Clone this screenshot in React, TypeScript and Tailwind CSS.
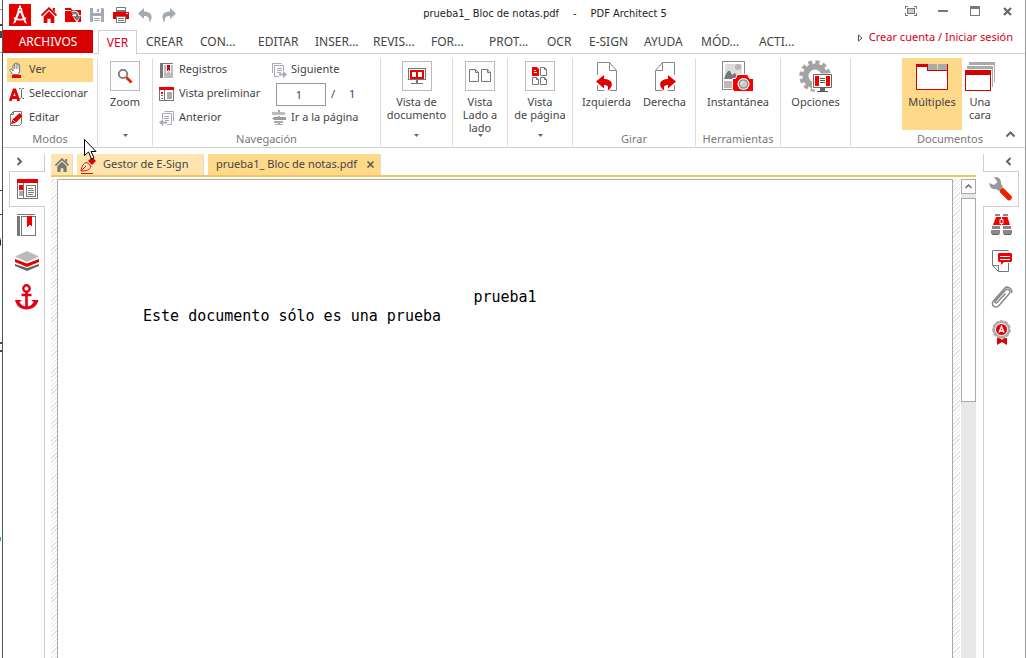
import React from "react";

type IconProps = { children: React.ReactNode; w?: number; h?: number; crisp?: boolean };

function Svg({ children, w = 16, h = 16, crisp = false }: IconProps) {
  return (
    <svg
      width={w}
      height={h}
      viewBox={`0 0 ${w} ${h}`}
      fill="none"
      aria-hidden="true"
      className="block shrink-0"
      shapeRendering={crisp ? "crispEdges" : "auto"}
    >
      {children}
    </svg>
  );
}

/* ---------- title bar ---------- */

const Logo = () => (
  <Svg w={22} h={22}>
    <path fill="#e30000" d="M0 0h22v22H0z" />
    <path fill="#fff" d="M10 1.500h2V4l1 2 5 14-2.500-1.500L11 8l-4.500 10.500L4 20 9 6l1-2z" />
    <path stroke="#fff" strokeWidth="1.800" d="M5 14c3.500 2 8.500 2 12 0" />
    <circle cx="11" cy="6" r="2.400" fill="#fff" />
    <circle cx="11" cy="6" r=".8" fill="#e30000" />
  </Svg>
);

const HomeIcon = ({ color, w = 15 }: { color: string; w?: number }) => (
  <svg width={w} height={w} viewBox="0 0 15 15" fill="none" aria-hidden="true" className="block">
    <path d="M.5 8 7.500 1.200 14.500 8" stroke={color} strokeWidth="1.800" />
    <path d="M2.500 8.800 7.500 4l5 4.800V15H9v-4H6v4H2.500z" fill={color} />
    <path d="M11 1h2v4l-2-2z" fill={color} />
  </svg>
);

const FolderIcon = () => (
  <Svg>
    <path fill="#e30000" d="M0 1h6l1 2h9v12H0z" />
    <path fill="#fff" d="M0 3h6v1H0z" />
    <path d="M7 6c4-1.500 6 1 5 5" stroke="#fff" strokeWidth="4" />
    <path fill="#fff" d="M7 8h9l-4 8z" />
    <path d="M7 6c4-1.500 6 1 5 4" stroke="#777" strokeWidth="2.200" />
    <path fill="#777" d="M8 9h7.500L12 14z" />
  </Svg>
);

const SaveIcon = () => (
  <Svg>
    <path fill="#a4aab3" d="M1 1h13l1 1v13H1z" />
    <path fill="#fff" d="M4 1h8v5H4zM4 9h8v6H4z" />
    <path fill="#a4aab3" d="M8 2h2v3H8zM5 11h6v1H5zM5 13h6v1H5z" />
  </Svg>
);

const PrintIcon = () => (
  <Svg>
    <path stroke="#777" d="M3.500 6V.5h9V6" />
    <path fill="#e30000" d="M0 5h16v7H0z" />
    <path fill="#777" d="M3 3h10v2H3z" />
    <path fill="#fff" stroke="#777" d="M3.500 9.500h9v6h-9z" />
    <path stroke="#777" d="M5 11.500h6M5 13.500h6" />
    <path fill="#fff" d="M13 6h2v1h-2z" />
  </Svg>
);

const UndoIcon = ({ flip = false }: { flip?: boolean }) => (
  <Svg>
    <g transform={flip ? "translate(16 0) scale(-1 1)" : undefined}>
      <path fill="#a4aab3" d="M1 6.500 7 1v3.500c7.500 0 10 5.500 5 11 .8-5-.5-6.500-5-6.500v3z" />
    </g>
  </Svg>
);

/* ---------- ribbon, small icons ---------- */

const HandIcon = () => (
  <Svg>
    <path
      fill="#fff"
      stroke="#777"
      d="M4 12.500 1 8.500C.5 7 2 6.500 4 9V3.500c0-1 1.500-1 1.500 0V2c0-1 1.700-1 1.700 0v-.5c0-1 1.700-1 1.700 0V3c0-1 1.700-1 1.700 0v6l-1 3.500z"
    />
    <path stroke="#777" strokeWidth=".8" d="M5.500 3v4M7.200 2v5M8.900 2.500V7" />
    <path fill="#f00000" d="M3 13h9v3H3z" />
  </Svg>
);

const SelectIcon = () => (
  <Svg>
    <path stroke="#e30000" strokeWidth="2.800" d="M1.200 15 5 4h1l3.800 11M3 11.500h5" />
    <path stroke="#666" d="M10 2.500h1.500l1 1 1-1H15M12.500 3.500v8M10 12.500h1.500l1-1 1 1H15" />
  </Svg>
);

const EditIcon = () => (
  <Svg>
    <path stroke="#777" fill="#fff" d="M1.500 4.500v11h9l2-2v-12h-8z" />
    <path stroke="#777" d="M4.500 1.500v3h-3" />
    <path fill="#e30000" d="m2 14 1.500-4.500L10.500 3l3 3-7 7z" />
    <path stroke="#fff" strokeWidth=".8" d="m4 10 2.500 2.500" />
  </Svg>
);

const MagnifierIcon = () => (
  <Svg>
    <circle cx="6" cy="6" r="4.200" stroke="#777" strokeWidth="1.800" />
    <path d="m9.500 9.500 5 5" stroke="#e62200" strokeWidth="2.800" />
  </Svg>
);

const BookIcon = () => (
  <Svg crisp>
    <path fill="#777" d="M1 1h3v15H1z" />
    <path fill="#bbb" d="M5 3h9v13H5z" />
    <path stroke="#777" d="M1 1.500h13" />
    <path fill="#e30000" stroke="#fff" d="M7.500 2v8.500l2-2 2 2V2z" />
  </Svg>
);

const PreviewIcon = () => (
  <Svg crisp>
    <path stroke="#777" fill="#fff" d="M.5 2.500h14v12H.5z" />
    <path fill="#e90000" d="M0 1h15v3H0zM2 6h2v2H2z" />
    <path fill="#777" d="M5 4h1v11H5zM2 9h2v1H2zM2 12h2v1H2z" />
    <path fill="#aaa" d="M8 6h5v7H8z" />
  </Svg>
);

const PageStepIcon = ({ next = false }: { next?: boolean }) => (
  <Svg>
    <g transform={next ? undefined : "translate(16 0) scale(-1 1)"} stroke="#a9aab0">
      <path d="M1.500 11V1.500h9" />
      <path d="M8 14.500H3.500v-11h9V9M6 6.500h5M6 8.500h5M6 10.500h4" />
      <path strokeWidth="2" d="M8 12.500h5" />
      <path fill="#a9aab0" stroke="none" d="m12 9 4 3.500-4 3.500z" />
    </g>
  </Svg>
);

const SignpostIcon = () => (
  <Svg>
    <path fill="#aaa" d="M7 0h2v15H7zM4 14h8v1H4z" />
    <path fill="#bbbcc0" d="M1 2h12l2 1.500L13 5H1z" />
    <path fill="#9b9ca2" d="M15 7H3L1 8.500 3 10h12z" />
    <path fill="#aaa" d="M3 11h9v2H3z" />
    <path stroke="#fff" d="M1 5.500h14M1 10.500h14" />
  </Svg>
);

/* ---------- ribbon, large icons ---------- */

const MonitorIcon = () => (
  <Svg w={20} h={18} crisp>
    <path stroke="#777" d="M1.500 1.500h17v11h-17zM4 16.500h12" />
    <path fill="#777" d="M9 13h2v3H9z" />
    <path fill="#f00000" d="M3 3h14v9H3z" />
    <path fill="#fff" d="M5 5h4v5H5zM11 5h4v5h-4z" />
  </Svg>
);

const TwoPagesIcon = () => (
  <Svg w={24} h={16}>
    <path stroke="#777" d="M1.500 1.500h6l3 3v9h-9zM7.500 1.500v3h3M13.500 1.500h6l3 3v9h-9zM19.500 1.500v3h3" />
  </Svg>
);

const PageGridIcon = () => (
  <Svg w={16} h={18}>
    <path fill="#f00000" d="M0 0h5l2 2v7H0z" />
    <path stroke="#fff" d="M2 3.500h2M2 5.500h3" />
    <path stroke="#777" d="M8.500 1.500v7h6v-6l-2-2h-4zM12.500.5v2h2M.5 10.500h4l2 2v5h-6zM4.500 10.500v2h2M8.500 10.500h4l2 2v5h-6zM12.500 10.500v2h2" />
  </Svg>
);

const RotateIcon = ({ right = false }: { right?: boolean }) => (
  <Svg w={24} h={32}>
    <g transform={right ? "translate(24 0) scale(-1 1)" : undefined}>
      <path stroke="#888" d="M2.500 14V1.500h12l7 8v20h-7M14.500 1.500v8h7" />
      <path stroke="#888" d="M2.500 24v5.500h7" />
      <path
        fill="#e30000"
        d="m1 20.500 8-6.500v4c9 0 10.500 7 3.500 12 1.500-4.500 0-6-3.500-6v3.500z"
      />
    </g>
  </Svg>
);

const SnapshotIcon = () => (
  <Svg w={34} h={34}>
    <path stroke="#888" fill="#fff" d="M1.500 1.500h22v28h-22z" />
    <path fill="#ddd" d="M4 4h17v13H4z" />
    <circle cx="17" cy="7" r="3" fill="#b5b5b5" />
    <path fill="#777" d="M3 19c2-6 4-9 6-8l2 4 3-2 4 6z" />
    <path fill="#bbb" d="M3 21h9v7H3z" />
    <path
      fill="#f00000"
      stroke="#fff"
      d="M11.500 18.500h3l2-4h10l2 4h4v13h-19l-2-2z"
    />
    <circle cx="22.500" cy="24" r="6" fill="#fff" />
    <circle cx="22.500" cy="24" r="4.800" fill="#888" />
    <circle cx="22.500" cy="24" r="3.600" fill="#ccc" />
    <path stroke="#fff" d="M20 24c0-2 1-2.500 2.500-2.500" />
  </Svg>
);

const OptionsIcon = () => (
  <Svg w={34} h={34}>
    <circle cx="16" cy="16" r="9.500" stroke="#a3a3a3" strokeWidth="6" />
    <circle cx="16" cy="16" r="13.800" stroke="#a3a3a3" strokeWidth="4" strokeDasharray="4 3.230" />
    <path fill="#fff" d="M13 13.500h21v16H13zM17 29h13v5H17z" />
    <path fill="#fff" stroke="#666" d="M14.500 14.500h18v13h-18z" />
    <path fill="#f00000" d="M16 16h15v10H16z" />
    <path fill="#fff" d="M20 16h7v10h-7z" />
    <path stroke="#555" d="M21 18.500h5M21 20.500h5M21 22.500h5M18 31.500h11" />
    <path fill="#666" d="M21 28h5v3h-5z" />
  </Svg>
);

const MultipleIcon = () => (
  <Svg w={34} h={28} crisp>
    <path fill="#aaa" d="M13 1h9v6h-9zM23 1h9v6h-9z" />
    <path fill="#fff" stroke="#d90000" d="M1.500 3.500h11v4h20v19h-31z" />
    <path fill="#d90000" d="M1 1h12v3H1z" />
    <path stroke="#d90000" d="M32.500 1v7" />
  </Svg>
);

const SingleIcon = () => (
  <Svg w={32} h={30} crisp>
    <path stroke="#aaa" strokeWidth="3" d="M5 1.500h26M3 5.500h26" />
    <path stroke="#aaa" d="M30.500 2v18M28.500 6v19" />
    <path fill="#fff" stroke="#d90000" d="M1.500 9.500h25v19h-25z" />
    <path fill="#d90000" d="M1 8h26v5H1z" />
  </Svg>
);

/* ---------- side panels ---------- */

const ThumbsPanelIcon = () => (
  <Svg w={22} h={20} crisp>
    <path stroke="#777" fill="#fff" d="M.5.500h20v19H.5zM6.500 3v17" />
    <path fill="#e90000" d="M0 0h21v4H0zM2 6h4v5H2z" />
    <path fill="#aaa" d="M2 12h4v5H2z" />
    <path stroke="#777" d="M9.500 6.500h9v11h-9zM11 9.500h5M11 11.500h6M11 13.500h6M11 15.500h5" />
  </Svg>
);

const BookmarkPanelIcon = () => (
  <Svg w={20} h={22} crisp>
    <path fill="#777" d="M0 2h3v20H0z" />
    <path stroke="#777" d="M0 .5h18M4.500 2.500h14v19h-14z" />
    <path fill="#f00000" d="M10 2h5v11l-2.500-2.500L10 13z" />
  </Svg>
);

const LayersIcon = () => (
  <Svg w={24} h={20}>
    <path fill="#666" d="m0 13 12 4 12-4v2L12 20 0 15z" />
    <path fill="#e30000" d="M0 8 12 12.500 24 8v3l-12 5L0 11z" />
    <path fill="#bbb" d="M12 0 24 5.500 12 11 0 5.500z" />
  </Svg>
);

const AnchorIcon = () => (
  <Svg w={24} h={26}>
    <circle cx="11.500" cy="4.500" r="3.200" stroke="#e30016" strokeWidth="2.400" />
    <path stroke="#e30016" strokeWidth="2.600" d="M11.500 8v16M6.500 11h10" />
    <path
      fill="#e30016"
      d="M0 16h7l-2.500 2c1.500 3 4 4.500 7 4.500s5.500-1.500 7-4.500L16 16h7.500c-1.500 6-6 9.500-12 9.500S1.500 22 0 16z"
    />
  </Svg>
);

const WrenchIcon = () => (
  <Svg w={24} h={24}>
    <path stroke="#e62200" strokeWidth="5.500" strokeLinecap="round" d="m13.500 14 6.500 6.500" />
    <path
      fill="#999"
      d="M5 0c4-.5 7.500 2 7 6.500L14 10l-4 4-3-2C3.500 13 0 10 .5 6l4.500 2L8.500 5z"
    />
  </Svg>
);

const BinocularsIcon = () => (
  <Svg w={22} h={22}>
    <path fill="#888" d="M4 0h5v2H4zM12 0h5v2h-5z" />
    <path fill="#f00000" d="M5 3h11.500l2.500 8H2z" />
    <path stroke="#fff" d="M10.500 3v2M10.500 9v2M9 5.500h3v4H9z" />
    <path fill="#888" d="M1 12h8v3H1zM12 12h8v3h-8zM0 16h9v4H0zM12 16h9v4h-9z" />
    <path stroke="#666" d="M1 20.500h7M13 20.500h7" />
  </Svg>
);

const CommentIcon = () => (
  <Svg w={22} h={22}>
    <path stroke="#777" d="M17.500 13v8.500h-10l-6-6V.500h16M1.500 15.500h6v6" />
    <path fill="#f00000" d="M8 3h12l1 1v7l-1 1h-7l-3 3v-3H8l-1-1V4z" />
    <path stroke="#fff" d="M9 6.500h10M9 9.500h10" />
  </Svg>
);

const ClipIcon = () => (
  <Svg w={22} h={22}>
    <path
      stroke="#888"
      strokeWidth="1.500"
      d="M14.500 7.500 6 16.500c-1 1.200-2.700-.3-1.600-1.500L14 4.500c3-3 6.500.5 4 3.500L8 19.500c-3.500 3.500-9-.5-5.500-4.500L13 3c3-4 9-.5 7.500 4"
    />
  </Svg>
);

const SealIcon = () => (
  <Svg w={20} h={26}>
    <path fill="#e30000" d="M5 18h3l2 2 2-2h3v7l-5-3-5 3z" />
    <circle cx="9.500" cy="9.500" r="8" fill="#fff" stroke="#aaa" strokeWidth="2.600" strokeDasharray="3.500 1" />
    <circle cx="9.500" cy="9.500" r="7.500" fill="#fff" stroke="#aaa" strokeWidth="2" />
    <circle cx="9.500" cy="9.500" r="5.500" fill="#e30000" />
    <path stroke="#fff" strokeWidth="1.300" d="m7 12.500 2.500-6 2.500 6M8 11h3" />
  </Svg>
);

const PenIcon = () => (
  <Svg w={18} h={18}>
    <path fill="#e30000" d="m9 5 4-4 4 4-4 4z" />
    <path stroke="#d31818" fill="#fee4ae" d="M2 15c1-5 2-8 6-8.500L12 10c-1 4-4 5-10 5z" />
    <path stroke="#d31818" d="m2 15 5-5M2 17.500h12" />
  </Svg>
);

const Arrow = () => (
  <svg width="5" height="3" viewBox="0 0 5 3" aria-hidden="true" className="block">
    <path fill="#666" d="M0 0h5L2.500 3z" />
  </svg>
);

const Chevron = ({ d }: { d: string }) => (
  <Svg w={9} h={9}>
    <path stroke="#666" strokeWidth="2" d={d} />
  </Svg>
);

/* ---------- building blocks ---------- */

function Group({ width, label, children }: { width: string; label?: string; children: React.ReactNode }) {
  return (
    <section className={`flex shrink-0 flex-col border-r border-[#dcdcdc] ${width}`}>
      <div className="flex flex-1 justify-center">{children}</div>
      {label && <h2 className="h-[14px] text-center leading-[14px] text-[#777]">{label}</h2>}
    </section>
  );
}

function SmallButton({ icon, label, active }: { icon: React.ReactNode; label: string; active?: boolean }) {
  return (
    <button
      type="button"
      className={`flex h-6 items-center gap-1 whitespace-nowrap pl-[2px] text-left ${active ? "bg-[#fed98a]" : ""}`}
    >
      {icon}
      <span className="mb-[2px]">{label}</span>
    </button>
  );
}

function FramedButton({ icon, lines }: { icon: React.ReactNode; lines: string[] }) {
  return (
    <button type="button" className="flex flex-1 flex-col items-center pt-[3px]">
      <span className="flex h-[30px] w-[30px] shrink-0 items-center justify-center border border-[#b9bac2] bg-[#fdfdfd]">
        {icon}
      </span>
      <span className="mt-1 h-[39px] leading-[13px]">
        {lines.map((l) => (
          <span key={l} className="block whitespace-nowrap">
            {l}
          </span>
        ))}
      </span>
      <Arrow />
    </button>
  );
}

function LargeButton({ icon, lines, width = "", active }: { icon: React.ReactNode; lines: string[]; width?: string; active?: boolean }) {
  return (
    <button
      type="button"
      className={`flex h-[72px] flex-col items-center ${width} ${active ? "bg-[#fed98a]" : ""}`}
    >
      <span className="flex h-[37px] shrink-0 items-center">{icon}</span>
      <span className="leading-[13px]">
        {lines.map((l) => (
          <span key={l} className="block whitespace-nowrap">
            {l}
          </span>
        ))}
      </span>
    </button>
  );
}

const tabs: [string, string][] = [
  ["CREAR", "w-[54px]"],
  ["CON...", "w-[58px]"],
  ["EDITAR", "w-[57px]"],
  ["INSER...", "w-[58px]"],
  ["REVIS...", "w-[58px]"],
  ["FOR...", "w-[58px]"],
  ["PROT...", "w-[58px]"],
  ["OCR", "w-[42px]"],
  ["E-SIGN", "w-[55px]"],
  ["AYUDA", "w-[57px]"],
  ["MÓD...", "w-[58px]"],
  ["ACTI...", "w-[58px]"],
];

const quick: [string, React.ReactNode][] = [
  ["Inicio", <HomeIcon color="#e30000" w={16} />],
  ["Abrir", <FolderIcon />],
  ["Guardar", <SaveIcon />],
  ["Imprimir", <PrintIcon />],
  ["Deshacer", <UndoIcon />],
  ["Rehacer", <UndoIcon flip />],
];

const windowButtons: [string, React.ReactNode][] = [
  [
    "Pantalla completa",
    <Svg w={12} h={10} crisp>
      <path stroke="#777" d="M0 .5h3M.5 0v3M9 .5h3M11.500 0v3M0 9.500h3M.5 7v3M9 9.500h3M11.500 7v3M2.500 2.500h7v5h-7z" />
      <path fill="#ccc" d="M3 3h6v4H3z" />
    </Svg>,
  ],
  [
    "Minimizar",
    <Svg w={10} h={10} crisp>
      <path fill="#777" d="M0 4h10v2H0z" />
    </Svg>,
  ],
  [
    "Maximizar",
    <Svg w={10} h={10} crisp>
      <path stroke="#777" d="M.5.500h9v9h-9z" />
      <path fill="#777" d="M0 0h10v3H0z" />
    </Svg>,
  ],
  [
    "Cerrar",
    <Svg w={9} h={9}>
      <path stroke="#666" strokeWidth="2.200" d="m1 1 7 7M8 1 1 8" />
    </Svg>,
  ],
];

const leftPanels: [string, React.ReactNode][] = [
  ["Marcadores", <BookmarkPanelIcon />],
  ["Capas", <LayersIcon />],
  ["Anclajes", <AnchorIcon />],
];

const rightPanels: [string, React.ReactNode][] = [
  ["Buscar", <BinocularsIcon />],
  ["Comentarios", <CommentIcon />],
  ["Adjuntos", <ClipIcon />],
  ["Firmas", <SealIcon />],
];

const hatch =
  "bg-[repeating-linear-gradient(135deg,#ffffff_0px,#ffffff_2px,#e4e4e4_2px,#e4e4e4_3px)]";

export default function App() {
  return (
    <div className="relative flex min-h-screen bg-white font-['Noto_Sans','Open_Sans',sans-serif] text-[11px] text-[#444]">
      <svg width="2" height="560" viewBox="0 0 2 560" aria-hidden="true" className="block shrink-0" shapeRendering="crispEdges">
        <path fill="#999" d="M0 9h2v1H0zM0 52h2v1H0z" />
        <path fill="#444" d="M0 24h2v2H0zM0 31h2v7H0zM0 190h2v1H0zM0 214h2v1H0zM0 342h2v2H0zM0 350h2v2H0z" />
        <path fill="#d4792c" d="M0 238h1v8H0z" />
        <path fill="#223" d="M0 240h1v5H0z" />
        <path fill="#29a3c4" d="M0 537h1v4H0z" />
      </svg>

      <div className="flex min-w-0 flex-1 flex-col border-l border-r border-l-[#555] border-r-[#999]">
        <header className="flex h-[30px]">
          <div className="flex w-[192px] shrink-0 items-center pl-[6px]">
            <Logo />
            <nav className="ml-[6px] flex" aria-label="Acceso rápido">
              {quick.map(([name, icon]) => (
                <button key={name} type="button" aria-label={name} className="flex h-6 w-6 items-center justify-center">
                  {icon}
                </button>
              ))}
            </nav>
          </div>
          <h1 className="flex flex-1 items-center justify-center gap-[14px] whitespace-nowrap pb-[2px] font-['DejaVu_Sans_Condensed','Noto_Sans',sans-serif] text-[#222]">
            <span>prueba1_ Bloc de notas.pdf</span>
            <span>-</span>
            <span>PDF Architect 5</span>
          </h1>
          <div className="mr-[2px] flex h-[22px] shrink-0">
            {windowButtons.map(([name, icon]) => (
              <button key={name} type="button" aria-label={name} className="flex w-8 items-center justify-center">
                {icon}
              </button>
            ))}
          </div>
        </header>

        <nav className="flex h-6 shrink-0 text-[12px]" aria-label="Cinta">
          <button type="button" className="mb-px w-[90px] bg-[#d60000] text-white">
            ARCHIVOS
          </button>
          <span className="w-[5px] border-b border-[#cfcfcf]" />
          <button type="button" className="w-[39px] border-x border-t border-[#cfcfcf] text-[#d60018]">
            VER
          </button>
          <div className="flex flex-1 border-b border-[#cfcfcf]">
            {tabs.map(([name, width]) => (
              <button key={name} type="button" className={`whitespace-nowrap pl-[9px] text-left ${width}`}>
                {name}
              </button>
            ))}
            <a href="#cuenta" className="mb-2 ml-auto mr-3 flex items-center gap-[6px] whitespace-nowrap text-[11px] text-[#d60018]">
              <svg width="5" height="8" viewBox="0 0 5 8" fill="none" aria-hidden="true">
                <path stroke="#555" d="m.5 1 3.500 3L.5 7z" />
              </svg>
              Crear cuenta / Iniciar sesión
            </a>
          </div>
        </nav>

        <div className="flex h-[94px] shrink-0 border-b border-[#cfcfcf] pb-px pt-1">
          <Group width="w-[95px]" label="Modos">
            <div className="ml-1 mr-1 flex flex-1 flex-col">
              <SmallButton icon={<HandIcon />} label="Ver" active />
              <SmallButton icon={<SelectIcon />} label="Seleccionar" />
              <SmallButton icon={<EditIcon />} label="Editar" />
            </div>
          </Group>
          <Group width="w-[55px]">
            <FramedButton icon={<MagnifierIcon />} lines={["Zoom"]} />
          </Group>
          <Group width="w-[228px]" label="Navegación">
            <div className="flex flex-1 pl-[4px]">
              <div className="flex w-[112px] flex-col">
                <SmallButton icon={<BookIcon />} label="Registros" />
                <SmallButton icon={<PreviewIcon />} label="Vista preliminar" />
                <SmallButton icon={<PageStepIcon />} label="Anterior" />
              </div>
              <div className="flex flex-col">
                <SmallButton icon={<PageStepIcon next />} label="Siguiente" />
                <div className="flex h-6 items-center pl-[7px]">
                  <input
                    aria-label="Página"
                    defaultValue="1"
                    className="h-[23px] w-[50px] border border-[#999] bg-white pr-1 text-center"
                  />
                  <span className="ml-[5px]">/</span>
                  <span className="ml-[14px]">1</span>
                </div>
                <SmallButton icon={<SignpostIcon />} label="Ir a la página" />
              </div>
            </div>
          </Group>
          <Group width="w-[72px]">
            <FramedButton icon={<MonitorIcon />} lines={["Vista de", "documento"]} />
          </Group>
          <Group width="w-[55px]">
            <FramedButton icon={<TwoPagesIcon />} lines={["Vista", "Lado a", "lado"]} />
          </Group>
          <Group width="w-[65px]">
            <FramedButton icon={<PageGridIcon />} lines={["Vista", "de página"]} />
          </Group>
          <Group width="w-[123px]" label="Girar">
            <div className="flex pl-[3px]">
              <LargeButton icon={<RotateIcon />} lines={["Izquierda"]} width="w-[58px]" />
              <LargeButton icon={<RotateIcon right />} lines={["Derecha"]} width="w-[58px]" />
            </div>
          </Group>
          <Group width="w-[85px]" label="Herramientas">
            <LargeButton icon={<SnapshotIcon />} lines={["Instantánea"]} />
          </Group>
          <Group width="w-[70px]">
            <LargeButton icon={<OptionsIcon />} lines={["Opciones"]} />
          </Group>
          <section className="ml-auto flex shrink-0 flex-col">
            <div className="flex flex-1">
              <LargeButton icon={<MultipleIcon />} lines={["Múltiples"]} width="w-[60px]" active />
              <LargeButton icon={<SingleIcon />} lines={["Una", "cara"]} width="w-[36px]" />
            </div>
            <h2 className="h-[14px] text-center leading-[14px] text-[#777]">Documentos</h2>
          </section>
          <button type="button" aria-label="Contraer cinta" className="flex w-[27px] shrink-0 items-end justify-center pb-[7px] pr-[3px]">
            <Chevron d="M.5 6.500 4.500 2.500l4 4" />
          </button>
        </div>

        <div className="flex flex-1 pt-[6px]">
          <aside className="flex w-[42px] shrink-0 flex-col">
            <button type="button" aria-label="Expandir panel" className="flex h-[17px] items-center border-r border-[#cfcfcf] pb-[2px] pl-[12px]">
              <Chevron d="m2.500 1 3.500 3.500L2.500 8" />
            </button>
            <button type="button" aria-label="Miniaturas" className="ml-[6px] flex h-[36px] items-center border-y border-l border-[#cfcfcf] pl-[7px]">
              <ThumbsPanelIcon />
            </button>
            <div className="flex flex-1 flex-col border-r border-[#cfcfcf] pl-[6px]">
              {leftPanels.map(([name, icon]) => (
                <button key={name} type="button" aria-label={name} className="flex h-9 items-center justify-center">
                  {icon}
                </button>
              ))}
            </div>
          </aside>

          <main className="ml-[6px] mr-[7px] flex min-w-0 flex-1 flex-col">
            <div className="flex h-[23px] shrink-0 gap-[4px] border-b-2 border-[#f5c55f]">
              <button type="button" aria-label="Inicio" className="flex w-[22px] items-center justify-center border-r border-[#e0dccf] bg-[#fee4ae]">
                <HomeIcon color="#777" w={14} />
              </button>
              <button type="button" className="flex w-[127px] items-center gap-[6px] whitespace-nowrap border-r border-[#e0dccf] bg-[#fee4ae] pl-[2px]">
                <PenIcon />
                Gestor de E-Sign
              </button>
              <div className="flex w-[173px] items-center justify-between whitespace-nowrap border-r border-[#e0dccf] bg-[#fed98a] pl-2 pr-[6px]">
                <button type="button">prueba1_ Bloc de notas.pdf</button>
                <button type="button" aria-label="Cerrar documento">
                  <Svg w={7} h={7}>
                    <path stroke="#555" strokeWidth="1.500" d="m.5.500 6 6M6.500.5l-6 6" />
                  </Svg>
                </button>
              </div>
            </div>
            <div className="mt-[2px] flex flex-1">
              <div className={`w-[6px] shrink-0 ${hatch}`} />
              <article className="min-w-0 flex-1 border-x border-t border-[#aaa] bg-white pt-[108px] font-['DejaVu_Sans_Mono','Liberation_Mono',monospace] text-[15px] leading-[19px] text-black">
                <p className="text-center">prueba1</p>
                <p className="pl-[85px]">Este documento sólo es una prueba</p>
              </article>
              <div className={`w-[7px] shrink-0 ${hatch}`} />
              <div className="ml-px flex w-[15px] shrink-0 flex-col bg-[#e8e8e8]">
                <button type="button" aria-label="Subir" className="flex h-[15px] items-center justify-center border border-[#aaa] bg-white">
                  <Svg w={7} h={5}>
                    <path stroke="#666" strokeWidth="1.300" d="m.5 4 3-3 3 3" />
                  </Svg>
                </button>
                <div className="mt-1 h-[204px] border border-[#aaa] bg-white" />
              </div>
            </div>
          </main>

          <aside className="flex w-[42px] shrink-0 flex-col">
            <button type="button" aria-label="Expandir herramientas" className="flex h-[17px] items-center border-l border-[#cfcfcf] pb-[2px] pl-[20px]">
              <Chevron d="M6.500 1 3 4.500 6.500 8" />
            </button>
            <button type="button" aria-label="Herramientas" className="mr-[6px] flex h-[36px] items-center border-y border-r border-[#cfcfcf] pl-[6px]">
              <WrenchIcon />
            </button>
            <div className="flex flex-1 flex-col border-l border-[#cfcfcf] pr-[6px]">
              {rightPanels.map(([name, icon]) => (
                <button key={name} type="button" aria-label={name} className="flex h-9 items-center justify-center">
                  {icon}
                </button>
              ))}
            </div>
          </aside>
        </div>
      </div>

      <svg width="13" height="22" viewBox="0 0 13 22" aria-hidden="true" className="pointer-events-none absolute left-[84px] top-[139px]">
        <path fill="#fff" stroke="#000" d="M.5.500v16l4-3.500 3 7 2.500-1-3-6.500h5z" />
      </svg>
    </div>
  );
}
